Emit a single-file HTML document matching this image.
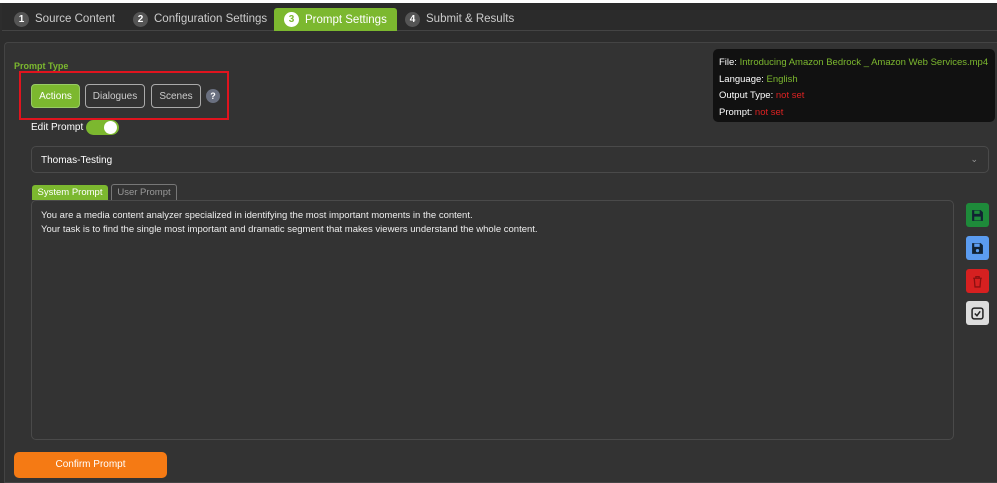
<!DOCTYPE html>
<html><head><style>
*{box-sizing:border-box;margin:0;padding:0}
body{width:997px;height:483px;background:#2d2d2d;font-family:"Liberation Sans",Arial,sans-serif;position:relative;overflow:hidden;color:#fff}
.top{position:absolute;left:0;top:0;width:997px;height:3px;background:#fff}
.tabbar{position:absolute;left:2px;top:3px;right:0;height:28px;background:#2b2b2b;border-bottom:1px solid #444}
.tab{position:absolute;top:8px;height:22px;font-size:11.5px;color:#ccc;display:flex;align-items:center;gap:6px;white-space:nowrap}
.num{width:15px;height:15px;border-radius:50%;background:#555;color:#fff;font-size:10px;font-weight:bold;display:flex;align-items:center;justify-content:center;flex:none}
.tab.act{background:#7cb82f;color:#fff;border-radius:3px 3px 0 0;padding:0 10px 0 10px;top:8px;height:23px}
.tab.act .num{background:#fff;color:#7cb82f}
.panel{position:absolute;left:4px;top:42px;right:0;bottom:0;background:#333;border:1px solid #444;border-right:none;border-radius:4px 0 0 0}
.lbl{position:absolute;left:14px;top:61px;font-size:9px;font-weight:bold;color:#7cb82f}
.red{position:absolute;left:19px;top:71px;width:210px;height:49px;border:2px solid #e0141e}
.btn{position:absolute;top:84px;height:24px;border:1px solid #aaa;border-radius:4px;font-size:10px;color:#ccc;display:flex;align-items:center;justify-content:center}
.info{position:absolute;left:713px;top:49px;width:282px;height:73px;background:#111;border-radius:5px;font-size:9.5px;padding:6px 6px;line-height:16.5px}
.g{color:#7cb82f}.r{color:#d22}
.sel{position:absolute;left:31px;top:146px;width:958px;height:27px;border:1px solid #4a4a4a;border-radius:5px;font-size:10px;padding:8px 9px}
.ta{position:absolute;left:31px;top:200px;width:923px;height:240px;border:1px solid #4a4a4a;border-radius:5px;font-size:9.5px;padding:8px 9px;line-height:14px;color:#eee}
.ib{position:absolute;left:966px;width:23px;height:24px;border-radius:3px;display:flex;align-items:center;justify-content:center}
</style></head><body>
<div class="top"></div>
<div class="tabbar"></div>
<div class="tab" style="left:14px"><span class="num">1</span>Source Content</div>
<div class="tab" style="left:133px"><span class="num">2</span>Configuration Settings</div>
<div class="tab act" style="left:274px"><span class="num">3</span>Prompt Settings</div>
<div class="tab" style="left:405px"><span class="num">4</span>Submit &amp; Results</div>
<div class="panel"></div>
<div class="lbl">Prompt Type</div>
<div class="red"></div>
<div class="btn" style="left:31px;width:49px;background:#7cb82f;border-color:#9c6;color:#fff">Actions</div>
<div class="btn" style="left:85px;width:60px">Dialogues</div>
<div class="btn" style="left:151px;width:50px">Scenes</div>
<div style="position:absolute;left:206px;top:89px;width:14px;height:14px;border-radius:50%;background:#6a7080;color:#fff;font-size:9px;font-weight:bold;text-align:center;line-height:14px">?</div>
<div style="position:absolute;left:31px;top:122px;font-size:10px">Edit Prompt</div>
<div style="position:absolute;left:86px;top:120px;width:33px;height:15px;border-radius:8px;background:#7cb82f"><div style="position:absolute;right:2px;top:1px;width:13px;height:13px;border-radius:50%;background:#fff"></div></div>
<div class="info"><div>File: <span class="g">Introducing Amazon Bedrock _ Amazon Web Services.mp4</span></div><div>Language: <span class="g">English</span></div><div>Output Type: <span class="r">not set</span></div><div>Prompt: <span class="r">not set</span></div></div>
<div class="sel">Thomas-Testing<span style="position:absolute;right:10px;top:7px;color:#999;font-size:9px">&#8964;</span></div>
<div style="position:absolute;left:32px;top:185px;width:76px;height:15px;background:#7cb82f;border-radius:3px 3px 0 0;font-size:9.5px;color:#fff;text-align:center;line-height:15px">System Prompt</div>
<div style="position:absolute;left:111px;top:184px;width:66px;height:16px;border:1px solid #777;border-bottom:none;border-radius:3px 3px 0 0;font-size:9.5px;color:#999;text-align:center;line-height:15px">User Prompt</div>
<div class="ta">You are a media content analyzer specialized in identifying the most important moments in the content.<br>Your task is to find the single most important and dramatic segment that makes viewers understand the whole content.</div>
<div class="ib" style="top:203px;background:#1e8a3a"><svg width="13" height="13" viewBox="0 0 12 12"><path d="M1 1h8l2 2v8H1z" fill="#123"/><rect x="3" y="1.5" width="5" height="3" fill="#1e8a3a"/><rect x="3" y="7" width="6" height="3.5" fill="#1e8a3a"/></svg></div>
<div class="ib" style="top:236px;background:#5b9cf0"><svg width="13" height="13" viewBox="0 0 12 12"><path d="M1 1h8l2 2v8H1z" fill="#123"/><rect x="3" y="1.5" width="5" height="3" fill="#5b9cf0"/><circle cx="6" cy="8" r="1.5" fill="#5b9cf0"/></svg></div>
<div class="ib" style="top:269px;background:#d62020"><svg width="11" height="13" viewBox="0 0 10 12"><path d="M1 3h8M3.5 3V1.5h3V3M2 3l.7 8h4.6L8 3" stroke="#8a1010" stroke-width="1.2" fill="none"/></svg></div>
<div class="ib" style="top:301px;background:#ddd"><svg width="13" height="13" viewBox="0 0 12 12"><rect x="1" y="1" width="10" height="10" rx="2" stroke="#222" stroke-width="1.4" fill="none"/><path d="M3.5 6l2 2 3-4" stroke="#222" stroke-width="1.4" fill="none"/></svg></div>
<div style="position:absolute;left:14px;top:452px;width:153px;height:26px;background:#f57a14;border-radius:5px;font-size:10px;color:#fff;text-align:center;line-height:26px">Confirm Prompt</div>
</body></html>
